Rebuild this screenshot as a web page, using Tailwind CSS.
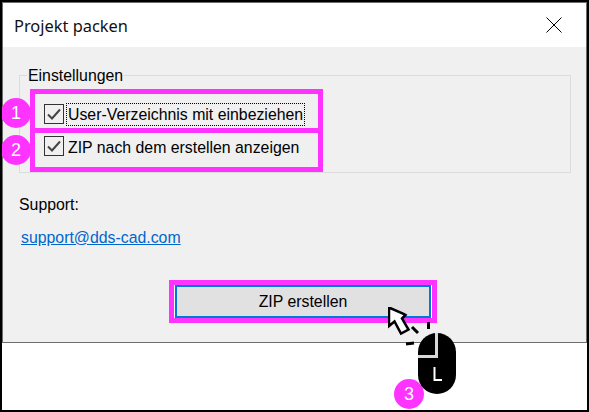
<!DOCTYPE html>
<html lang="de">
<head>
    <meta charset="UTF-8">
    <title>Projekt packen</title>
    <script src="https://cdn.jsdelivr.net/npm/@tailwindcss/browser@4"></script>
</head>
<body class="bg-white">
<div class="relative w-[589px] h-[412px] border-2 border-black bg-white overflow-hidden font-['Liberation_Sans',Arial,sans-serif] text-[15.85px] text-black">
    <!-- dialog -->
    <div class="w-[585px] h-[341px] border border-[#6d6d6d] flex flex-col">
        <header class="h-[44px] shrink-0 bg-white flex items-center justify-between pl-[11px] pr-[24px]">
            <span class="font-['Noto_Sans',sans-serif] text-[16.4px] text-[#111] pt-[2px]">Projekt packen</span>
            <svg class="w-[16px] h-[16px]" viewBox="0 0 16 16" fill="none" stroke="#000" stroke-width="1">
                <path d="M0.5 0.5 15.5 15.5M15.5 0.5 0.5 15.5"/>
            </svg>
        </header>
        <main class="flex-1 bg-[#f0f0f0] pl-[16px] pr-[15px] pt-[18px] flex flex-col">
            <fieldset class="border border-[#dcdcdc] h-[108px] pl-[7px]">
                <legend class="px-px pt-[2px] leading-[18px]">Einstellungen</legend>
                <div class="pl-[17px] pt-[19px] flex flex-col gap-[12px]">
                    <label class="flex items-center gap-[3px] h-[20px]">
                        <span class="w-[20px] h-[20px] border border-[#333] bg-[#f0f0f0] flex items-center justify-center">
                            <svg class="w-[16px] h-[16px]" viewBox="0 0 16 16" fill="none" stroke="#444" stroke-width="2"><path d="M2 8.5 6 12.5 14 3.5"/></svg>
                        </span>
                        <span class="outline-1 outline-dotted outline-black px-px leading-[21px]">User-Verzeichnis mit einbeziehen</span>
                    </label>
                    <label class="flex items-center gap-[3px] h-[20px]">
                        <span class="w-[20px] h-[20px] border border-[#333] bg-[#f0f0f0] flex items-center justify-center">
                            <svg class="w-[16px] h-[16px]" viewBox="0 0 16 16" fill="none" stroke="#444" stroke-width="2"><path d="M2 8.5 6 12.5 14 3.5"/></svg>
                        </span>
                        <span class="px-px pt-[2px] leading-[21px]">ZIP nach dem erstellen anzeigen</span>
                    </label>
                </div>
            </fieldset>
            <p class="mt-[23px] leading-[18px]">Support:</p>
            <a class="mt-[15px] ml-[2px] leading-[18px] text-[#0066cc] underline self-start" href="#">support@dds-cad.com</a>
            <div class="mt-[38px] flex">
                <button class="w-[256px] h-[33px] ml-[156px] border-2 border-[#0078d7] bg-[#e1e1e1] outline-1 outline-white">ZIP erstellen</button>
            </div>
        </main>
    </div>

    <!-- annotations -->
    <div class="absolute left-[28px] top-[87px] w-[293px] h-[44px] border-[5px] border-[#ff33ff]"></div>
    <div class="absolute left-[28px] top-[126px] w-[293px] h-[44px] border-[5px] border-[#ff33ff]"></div>
    <div class="absolute left-[167px] top-[278px] w-[268px] h-[43px] border-[5px] border-[#ff33ff]"></div>
    <span class="absolute left-[-1px] top-[96px] w-[30px] h-[30px] rounded-full bg-[#ff33ff] text-white text-[18px] flex items-center justify-center">1</span>
    <span class="absolute left-[-1px] top-[133px] w-[30px] h-[30px] rounded-full bg-[#ff33ff] text-white text-[18px] flex items-center justify-center">2</span>
    <span class="absolute left-[392px] top-[377px] w-[30px] h-[30px] rounded-full bg-[#ff33ff] text-white text-[18px] flex items-center justify-center">3</span>

    <!-- cursor + mouse -->
    <svg class="absolute left-[386px] top-[305px] w-[90px] h-[100px]" viewBox="388 307 90 100" fill="none">
        <path d="M389 307.5V326L394.5 321.5 401 333.5 408.5 329.5 402 318.5 405.5 315 404 314Z" fill="#fff" stroke="#000" stroke-width="2.5"/>
        <path d="M428.5 322V329M412 327 418 333M406 344 414 343" stroke="#000" stroke-width="3"/>
        <rect x="418" y="333" width="38" height="61" rx="19" fill="#000"/>
        <path d="M436.5 333V356.5H418" stroke="#d8d8d8" stroke-width="3"/>
        <path d="M434.5 367V380H442" stroke="#fff" stroke-width="2"/>
    </svg>
</div>
</body>
</html>
